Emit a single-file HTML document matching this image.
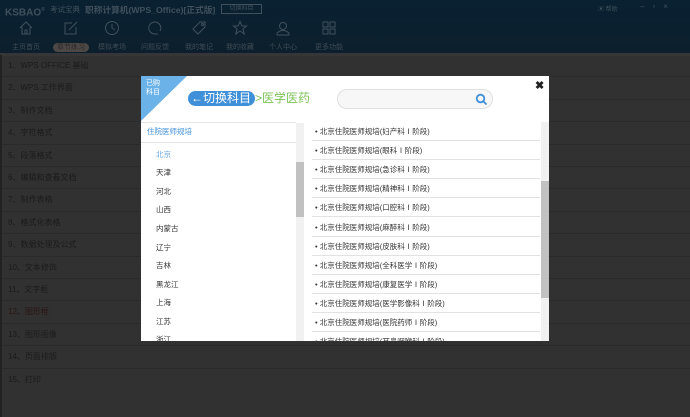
<!DOCTYPE html>
<html><head><meta charset="utf-8"><style>
*{margin:0;padding:0;box-sizing:border-box}
body{width:690px;height:417px;overflow:hidden;background:#313131;font-family:"Liberation Sans","Noto Sans CJK SC",sans-serif;position:relative}
.hdr{position:absolute;left:0;top:0;width:690px;height:53px;background:linear-gradient(#0a2132,#0c1f2c)}
.strip{position:absolute;left:0;top:53px;width:690px;height:3px;background:#363636}
.ttl{position:absolute;top:4px;color:#3f505c;font-size:10px;font-weight:bold;white-space:nowrap;line-height:12px}
.nav{position:absolute;top:20px;width:44px;text-align:center}
.nav svg{display:block;margin:0 auto}
.nav span{display:inline-block;font-size:7px;color:#3f4c55;margin-top:4px;padding:0 4px;border-radius:6px;line-height:9px}
.row{position:absolute;left:2px;width:688px;height:22.4px;border-bottom:1px solid #2a2a2a;font-size:8px;color:#1b1b1b;padding-left:6px;line-height:22px}
.lb{position:absolute;left:0;top:55px;width:2px;height:362px;background:#222}
.modal{position:absolute;left:141px;top:76px;width:408px;height:265px;background:#fff;overflow:hidden}
.corner{position:absolute;left:0;top:0;width:0;height:0;border-top:45px solid #6bb2e8;border-right:46px solid transparent}
.ct{position:absolute;left:5px;top:3px;color:#fff;font-size:7px;line-height:9px}
.btn{position:absolute;left:47px;top:15px;height:15px;width:67px;background:#3f8fd9;border-radius:8px;color:#fff;font-size:12px;line-height:15px;padding-left:3px;white-space:nowrap}
.crumb{position:absolute;left:114px;top:13px;color:#7cc25a;font-size:12px;line-height:18px}
.search{position:absolute;left:196px;top:13px;width:156px;height:20px;border:1px solid #e0e0e0;border-radius:10px;background:#f7f7f7}
.close{position:absolute;left:394px;top:3px;font-size:11px;font-weight:bold;color:#222}
.lp{position:absolute;left:0;top:46px;width:155px;height:219px;border-top:1px solid #e4e4e4}
.li{position:absolute;left:15px;font-size:7.5px;color:#333}
.rp{position:absolute;left:164px;top:46px;width:244px;height:219px}
.ri{position:absolute;left:7px;width:228px;height:19px;border-bottom:1px solid #e2e2e2;font-size:7.5px;color:#333;line-height:19px;padding-left:3px;white-space:nowrap}
.sb{position:absolute;width:8px;background:#f1f1f1}
.th{position:absolute;left:0;width:8px;background:#c1c1c1}
</style></head><body>
<div class="hdr"></div>
<div class="ttl" style="left:5px;font-size:10px">KSBAO<sup style="font-size:5px">®</sup></div>
<div class="ttl" style="left:50px;font-weight:normal;font-size:7.5px">考试宝典</div>
<div class="ttl" style="left:85px;font-size:8.7px">职称计算机(WPS_Office)[正式版]</div>
<div style="position:absolute;left:221px;top:4px;width:41px;height:10px;border:1px solid #3f505c;color:#3f505c;font-size:6px;text-align:center;line-height:8px">切换科目</div>
<div style="position:absolute;left:598px;top:4px;font-size:6px;color:#3f505c">▣ 帮助</div>
<div style="position:absolute;left:640px;top:2px;font-size:8px;color:#3f505c;letter-spacing:8px">–▫×</div>
<div class="nav" style="left:4px"><svg width="16" height="16" viewBox="0 0 16 16" fill="none" stroke="#3f505c"><path d="M2 8L8 2L14 8M4 7V14H12V7M7 14V10H9V14"/></svg><span>主页首页</span></div>
<div class="nav" style="left:49px"><svg width="16" height="16" viewBox="0 0 16 16" fill="none" stroke="#3f505c"><path d="M9 3H2V14H13V7M6 10L14 2"/></svg><span style="background:#4d4845;color:#2a2a2a">章节练习</span></div>
<div class="nav" style="left:90px"><svg width="16" height="16" viewBox="0 0 16 16" fill="none" stroke="#3f505c"><circle cx="8" cy="8" r="6.5"/><path d="M8 4V8L11 10"/></svg><span>模拟考场</span></div>
<div class="nav" style="left:133px"><svg width="16" height="16" viewBox="0 0 16 16" fill="none" stroke="#3f505c"><path d="M13 11A6 6 0 1 0 8 14L11 14"/></svg><span>问题反馈</span></div>
<div class="nav" style="left:177px"><svg width="16" height="16" viewBox="0 0 16 16" fill="none" stroke="#3f505c"><path d="M9 2H14V7L7 14L2 9Z"/><circle cx="11.5" cy="4.5" r="1"/></svg><span>我的笔记</span></div>
<div class="nav" style="left:218px"><svg width="16" height="16" viewBox="0 0 16 16" fill="none" stroke="#3f505c"><path d="M8 1.5L10 6H14.5L11 9L12.3 14L8 11L3.7 14L5 9L1.5 6H6Z"/></svg><span>我的收藏</span></div>
<div class="nav" style="left:261px"><svg width="16" height="16" viewBox="0 0 16 16" fill="none" stroke="#3f505c"><circle cx="8" cy="6" r="3.5"/><path d="M2 15V13Q8 8 14 13V15Z"/></svg><span>个人中心</span></div>
<div class="nav" style="left:307px"><svg width="16" height="16" viewBox="0 0 16 16" fill="none" stroke="#3f505c"><rect x="2" y="2" width="5" height="5"/><rect x="9" y="2" width="5" height="5"/><rect x="2" y="9" width="5" height="5"/><rect x="9" y="9" width="5" height="5"/></svg><span>更多功能</span></div>
<div class="strip"></div>
<div class="lb"></div>
<div class="row" style="top:55px">1、WPS OFFICE 基础</div>
<div class="row" style="top:77.4px">2、WPS 工作界面</div>
<div class="row" style="top:99.8px">3、制作文档</div>
<div class="row" style="top:122.2px">4、字符格式</div>
<div class="row" style="top:144.6px">5、段落格式</div>
<div class="row" style="top:167px">6、编辑和查看文档</div>
<div class="row" style="top:189.4px">7、制作表格</div>
<div class="row" style="top:211.8px">8、格式化表格</div>
<div class="row" style="top:234.2px">9、数据处理及公式</div>
<div class="row" style="top:256.6px">10、文本修饰</div>
<div class="row" style="top:279px">11、文字框</div>
<div class="row" style="top:301.4px;color:#2a1515">12、图形框</div>
<div class="row" style="top:323.8px">13、图形图像</div>
<div class="row" style="top:346.2px">14、页面排版</div>
<div class="row" style="top:368.6px;border:none">15、打印</div>

<div class="modal">
<div class="corner"></div>
<div class="ct">已购<br>科目</div>
<div class="btn">←切换科目</div>
<div class="crumb">&gt;医学医药</div>
<div class="search"><svg style="position:absolute;right:4px;top:3px" width="13" height="13" viewBox="0 0 13 13" fill="none" stroke="#3f8fd9" stroke-width="1.8"><circle cx="5.5" cy="5.5" r="3.8"/><path d="M8.3 8.3L11.5 11.5"/></svg></div>
<div class="close">✖</div>
<div class="lp">
<div style="position:absolute;left:0;top:0;width:155px;height:20px;border-bottom:1px solid #e4e4e4;color:#3f8fd9;font-size:7.5px;line-height:18px;padding-left:6px">住院医师规培</div>
<div class="li" style="top:26px;color:#6aa8e0">北京</div>
<div class="li" style="top:44px">天津</div>
<div class="li" style="top:63px">河北</div>
<div class="li" style="top:81px">山西</div>
<div class="li" style="top:100px">内蒙古</div>
<div class="li" style="top:119px">辽宁</div>
<div class="li" style="top:137px">吉林</div>
<div class="li" style="top:156px">黑龙江</div>
<div class="li" style="top:174px">上海</div>
<div class="li" style="top:193px">江苏</div>
<div class="li" style="top:211px">浙江</div>
<div class="sb" style="left:155px;top:0;height:219px"><div class="th" style="top:39px;height:55px"></div></div>
</div>
<div class="rp">
<div class="ri" style="top:0">• 北京住院医师规培(妇产科Ⅰ阶段)</div>
<div class="ri" style="top:19.1px">• 北京住院医师规培(眼科Ⅰ阶段)</div>
<div class="ri" style="top:38.2px">• 北京住院医师规培(急诊科Ⅰ阶段)</div>
<div class="ri" style="top:57.3px">• 北京住院医师规培(精神科Ⅰ阶段)</div>
<div class="ri" style="top:76.4px">• 北京住院医师规培(口腔科Ⅰ阶段)</div>
<div class="ri" style="top:95.5px">• 北京住院医师规培(麻醉科Ⅰ阶段)</div>
<div class="ri" style="top:114.6px">• 北京住院医师规培(皮肤科Ⅰ阶段)</div>
<div class="ri" style="top:133.7px">• 北京住院医师规培(全科医学Ⅰ阶段)</div>
<div class="ri" style="top:152.8px">• 北京住院医师规培(康复医学Ⅰ阶段)</div>
<div class="ri" style="top:171.9px">• 北京住院医师规培(医学影像科Ⅰ阶段)</div>
<div class="ri" style="top:191px">• 北京住院医师规培(医院药师Ⅰ阶段)</div>
<div class="ri" style="top:210.1px">• 北京住院医师规培(耳鼻咽喉科Ⅰ阶段)</div>
<div class="sb" style="left:236px;top:0;height:219px"><div class="th" style="top:59px;height:117px"></div></div>
</div>
</div>
</body></html>
